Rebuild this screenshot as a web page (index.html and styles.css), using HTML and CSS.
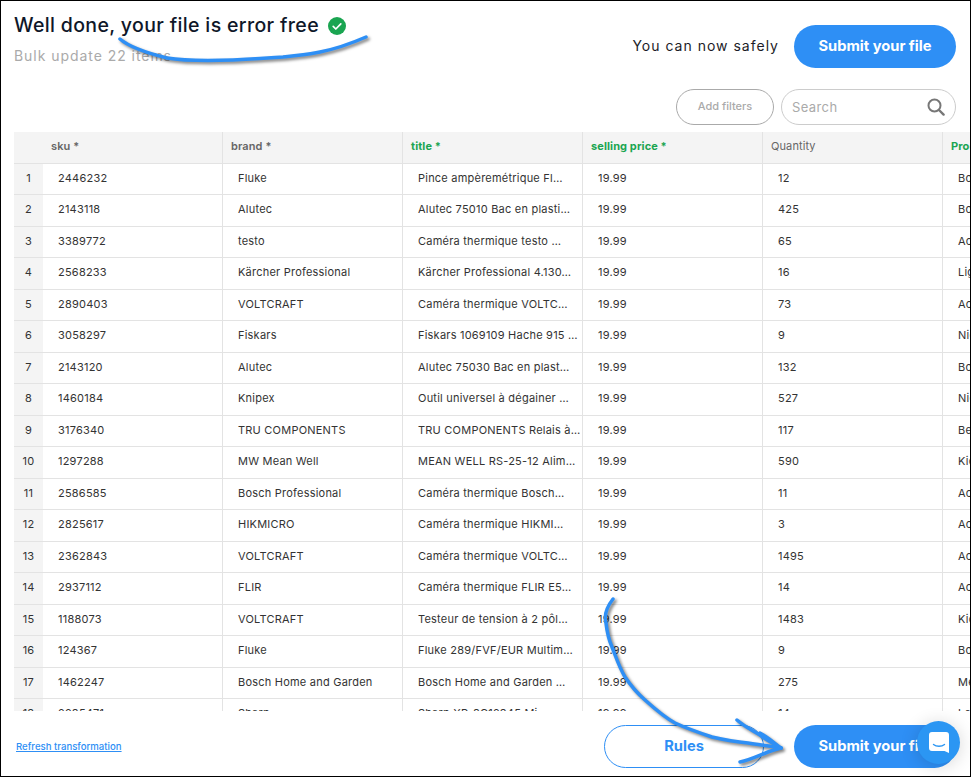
FILE: index.html
```html
<!DOCTYPE html>
<html lang="en">
<head>
<meta charset="utf-8">
<title>Well done, your file is error free</title>
<link rel="stylesheet" href="styles.css">
</head>
<body>
<div class="page">
  <header class="top">
    <div class="heading">
      <h1 class="title">Well done, your file is error free
        <svg class="check" viewBox="0 0 18 18" width="18" height="18"><circle cx="9" cy="9" r="9" fill="#1aa551"/><path d="M5.2 9.4l2.6 2.6 5-5.2" fill="none" stroke="#fff" stroke-width="1.7" stroke-linecap="round" stroke-linejoin="round"/></svg>
      </h1>
      <p class="subtitle">Bulk update 22 items</p>
    </div>
    <div class="actions">
      <span class="safely">You can now safely</span>
      <button class="btn btn-primary">Submit your file</button>
    </div>
  </header>
  <div class="filters">
    <button class="btn-filter">Add filters</button>
    <label class="search">
      <span class="search-text">Search</span>
      <svg class="search-icon" viewBox="0 0 18 18" width="18" height="18"><circle cx="7.5" cy="7.5" r="6" fill="none" stroke="#777" stroke-width="2"/><path d="M12 12l4.6 4.6" stroke="#777" stroke-width="2.4" stroke-linecap="round"/></svg>
    </label>
  </div>
  <div class="table">
    <div class="row head">
      <div class="num"></div>
      <div class="cell">sku *</div>
      <div class="cell">brand *</div>
      <div class="cell green">title *</div>
      <div class="cell green">selling price *</div>
      <div class="cell plain">Quantity</div>
      <div class="cell green">Product</div>
    </div>
    <div class="row"><div class="num">1</div><div class="cell">2446232</div><div class="cell">Fluke</div><div class="cell">Pince ampèremétrique Fl…</div><div class="cell">19.99</div><div class="cell">12</div><div class="cell">Bo</div></div>
    <div class="row"><div class="num">2</div><div class="cell">2143118</div><div class="cell">Alutec</div><div class="cell">Alutec 75010 Bac en plasti…</div><div class="cell">19.99</div><div class="cell">425</div><div class="cell">Bo</div></div>
    <div class="row"><div class="num">3</div><div class="cell">3389772</div><div class="cell">testo</div><div class="cell">Caméra thermique testo …</div><div class="cell">19.99</div><div class="cell">65</div><div class="cell">Ac</div></div>
    <div class="row"><div class="num">4</div><div class="cell">2568233</div><div class="cell">Kärcher Professional</div><div class="cell">Kärcher Professional 4.130…</div><div class="cell">19.99</div><div class="cell">16</div><div class="cell">Lig</div></div>
    <div class="row"><div class="num">5</div><div class="cell">2890403</div><div class="cell">VOLTCRAFT</div><div class="cell">Caméra thermique VOLTC…</div><div class="cell">19.99</div><div class="cell">73</div><div class="cell">Ac</div></div>
    <div class="row"><div class="num">6</div><div class="cell">3058297</div><div class="cell">Fiskars</div><div class="cell">Fiskars 1069109 Hache 915 …</div><div class="cell">19.99</div><div class="cell">9</div><div class="cell">Nig</div></div>
    <div class="row"><div class="num">7</div><div class="cell">2143120</div><div class="cell">Alutec</div><div class="cell">Alutec 75030 Bac en plast…</div><div class="cell">19.99</div><div class="cell">132</div><div class="cell">Bo</div></div>
    <div class="row"><div class="num">8</div><div class="cell">1460184</div><div class="cell">Knipex</div><div class="cell">Outil universel à dégainer …</div><div class="cell">19.99</div><div class="cell">527</div><div class="cell">Nig</div></div>
    <div class="row"><div class="num">9</div><div class="cell">3176340</div><div class="cell">TRU COMPONENTS</div><div class="cell">TRU COMPONENTS Relais à…</div><div class="cell">19.99</div><div class="cell">117</div><div class="cell">Be</div></div>
    <div class="row"><div class="num">10</div><div class="cell">1297288</div><div class="cell">MW Mean Well</div><div class="cell">MEAN WELL RS-25-12 Alim…</div><div class="cell">19.99</div><div class="cell">590</div><div class="cell">Kid</div></div>
    <div class="row"><div class="num">11</div><div class="cell">2586585</div><div class="cell">Bosch Professional</div><div class="cell">Caméra thermique Bosch…</div><div class="cell">19.99</div><div class="cell">11</div><div class="cell">Ac</div></div>
    <div class="row"><div class="num">12</div><div class="cell">2825617</div><div class="cell">HIKMICRO</div><div class="cell">Caméra thermique HIKMI…</div><div class="cell">19.99</div><div class="cell">3</div><div class="cell">Ac</div></div>
    <div class="row"><div class="num">13</div><div class="cell">2362843</div><div class="cell">VOLTCRAFT</div><div class="cell">Caméra thermique VOLTC…</div><div class="cell">19.99</div><div class="cell">1495</div><div class="cell">Ac</div></div>
    <div class="row"><div class="num">14</div><div class="cell">2937112</div><div class="cell">FLIR</div><div class="cell">Caméra thermique FLIR E5…</div><div class="cell">19.99</div><div class="cell">14</div><div class="cell">Ac</div></div>
    <div class="row"><div class="num">15</div><div class="cell">1188073</div><div class="cell">VOLTCRAFT</div><div class="cell">Testeur de tension à 2 pôl…</div><div class="cell">19.99</div><div class="cell">1483</div><div class="cell">Kid</div></div>
    <div class="row"><div class="num">16</div><div class="cell">124367</div><div class="cell">Fluke</div><div class="cell">Fluke 289/FVF/EUR Multim…</div><div class="cell">19.99</div><div class="cell">9</div><div class="cell">Bo</div></div>
    <div class="row"><div class="num">17</div><div class="cell">1462247</div><div class="cell">Bosch Home and Garden</div><div class="cell">Bosch Home and Garden …</div><div class="cell">19.99</div><div class="cell">275</div><div class="cell">Me</div></div>
    <div class="row"><div class="num">18</div><div class="cell">2285471</div><div class="cell">Sharp</div><div class="cell">Sharp XP-8C12345 Mi…</div><div class="cell">19.99</div><div class="cell">14</div><div class="cell">Le</div></div>
  </div>
  <footer class="bottom">
    <a class="refresh" href="#">Refresh transformation</a>
    <div class="bottom-actions">
      <button class="btn btn-outline">Rules</button>
      <button class="btn btn-primary">Submit your file</button>
    </div>
  </footer>
  <div class="chat">
    <svg viewBox="0 0 20 21" width="20" height="21"><path d="M3 0h14a3 3 0 0 1 3 3v18l-4.500-2H3a3 3 0 0 1-3-3V3a3 3 0 0 1 3-3z" fill="#fff"/><path d="M4.500 12.500c3 2.300 8 2.300 11 0" fill="none" stroke="#2b96f3" stroke-width="1.400" stroke-linecap="round"/></svg>
  </div>
  <svg class="marks" viewBox="0 0 971 777" width="971" height="777">
    <path d="M120 39C128 46 143 52 167 58C185 61 205 61 233 60C255 59 268 58 283 57C300 55 312 54 320 52C335 49 350 44 366 37" />
    <path d="M613 599C606 608 604 616 606 623C607 632 608 638 612 647C616 657 619 667 625 677C631 686 637 693 645 700C655 709 664 717 675 723C688 729 700 733 712 737C725 740 737 742 748 743C760 745 771 746 781 748" />
    <path d="M737 720C745 727 752 730 760 735C768 741 775 744 781 748C774 743 768 737 760 733" />
    <path d="M740 762C750 760 760 755 768 752C773 750 777 749 781 748" />
  </svg>
</div>
</body>
</html>
```

FILE: styles.css
```css
* { box-sizing: border-box; }
html, body { margin: 0; padding: 0; background: #fff; }
body { font-family: Inter, "Noto Sans", sans-serif; color: #333; }

.page {
  position: relative;
  display: flex;
  flex-direction: column;
  width: 971px;
  height: 777px;
  border: 1px solid #000;
  overflow: hidden;
  background: #fff;
}

.top {
  display: flex;
  justify-content: space-between;
  height: 88px;
  padding: 0 14px 0 13px;
}
.heading { padding-top: 11px; }
.title {
  display: flex;
  align-items: center;
  gap: 9px;
  margin: 0;
  height: 25px;
  font-size: 19.5px;
  font-weight: 500;
  letter-spacing: 0.35px;
  color: #0f1729;
  white-space: nowrap;
}
.check { flex: none; margin-top: 3px; }
.subtitle {
  margin: 10px 0 0;
  font-size: 14px;
  letter-spacing: 0.95px;
  color: #aaa;
}
.actions {
  display: flex;
  align-items: center;
  gap: 15px;
  padding-top: 24px;
  height: 67px;
}
.safely { margin-top: -3px; font-size: 14px; letter-spacing: 1px; color: #1c1c28; }

.btn {
  width: 162px;
  height: 43px;
  border-radius: 22px;
  font-family: inherit;
  font-size: 14.7px;
  font-weight: 700;
  padding: 0 0 1px;
}
.btn-primary { background: #2e8ff5; border: 0; color: #fff; }
.btn-outline { width: 160px; background: transparent; border: 1px solid #2e8ff5; color: #2e8ff5; }

.filters {
  display: flex;
  justify-content: flex-end;
  gap: 7px;
  height: 36px;
  padding-right: 14px;
}
.btn-filter {
  width: 98px;
  border: 1px solid #aaa;
  border-radius: 18px;
  background: #fff;
  font-family: inherit;
  font-size: 11px;
  font-weight: 500;
  color: #aaa;
  padding: 0 0 2px;
}
.search {
  display: flex;
  align-items: center;
  justify-content: space-between;
  width: 175px;
  border: 1px solid #ccc;
  border-radius: 18px;
  padding: 0 10px;
}
.search-text { font-size: 13px; letter-spacing: 0.4px; color: #aaa; }

.table {
  flex: none;
  height: 579px;
  margin: 7px 0 0 13px;
  overflow: hidden;
}
.row {
  display: grid;
  grid-template-columns: 29px repeat(5, 180px) 180px;
  height: 31.5px;
  width: 1109px;
  border-bottom: 1px solid #e3e3e3;
  font-size: 11px;
  letter-spacing: 0.22px;
  line-height: 28px;
  color: #333;
}
.num {
  background: #f4f4f4;
  text-align: center;
}
.cell {
  padding-left: 15px;
  border-right: 1px solid #e3e3e3;
  white-space: nowrap;
  overflow: hidden;
}
.head { background: #f4f4f4; font-weight: 600; letter-spacing: 0.1px; color: #666; line-height: 28px; }
.head .cell { padding-left: 8px; }
.head .green { color: #1aa551; font-weight: 700; }
.head .plain { font-weight: 400; }

.bottom {
  flex: 1;
  display: flex;
  align-items: flex-start;
  justify-content: space-between;
  padding: 14px 14px 0 15px;
}
.refresh {
  margin-top: 16px;
  font-size: 9.6px;
  font-weight: 500;
  color: #2e8ff5;
}
.bottom-actions { display: flex; gap: 30px; }

.chat {
  position: absolute;
  left: 916px;
  top: 720px;
  display: flex;
  align-items: center;
  justify-content: center;
  width: 43px;
  height: 43px;
  border-radius: 50%;
  background: #2b96f3;
  box-shadow: 0 2px 18px rgba(0, 0, 0, 0.16);
}
.marks {
  position: absolute;
  left: -1px;
  top: -1px;
  fill: none;
  stroke: #2e8ff5;
  stroke-width: 3.5;
  stroke-linecap: round;
  stroke-linejoin: round;
  filter: drop-shadow(2px 2px 1.5px rgba(0, 0, 0, 0.5));
  pointer-events: none;
}
```
